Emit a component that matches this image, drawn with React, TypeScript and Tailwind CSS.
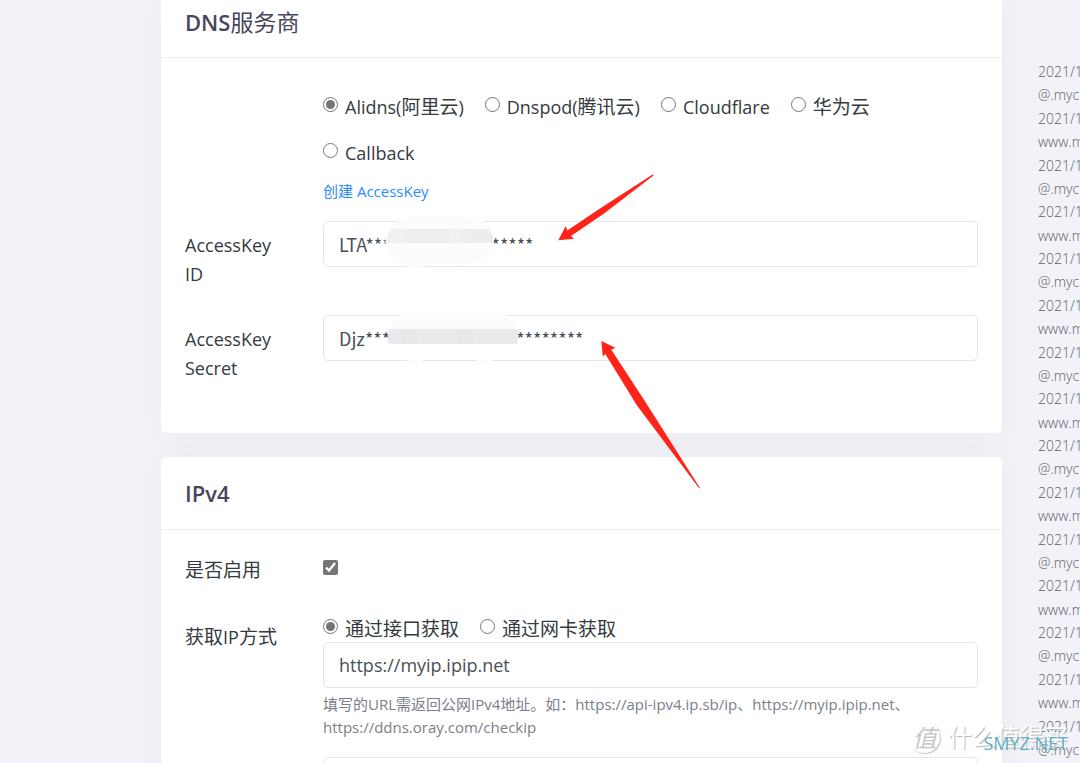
import React, { useState } from "react";
import type { ReactNode } from "react";

/** Chinese run, set a little larger than the Latin text around it. */
function Zh({ children }: { children: ReactNode }) {
  return <span className="text-[19px]">{children}</span>;
}

type ChoiceProps = {
  name: string;
  checked: boolean;
  onSelect: () => void;
  children: ReactNode;
};

function Choice({ name, checked, onSelect, children }: ChoiceProps) {
  return (
    <label className="flex items-start gap-[7px] whitespace-nowrap">
      <input
        type="radio"
        name={name}
        checked={checked}
        onChange={onSelect}
        className="mt-1 size-[15px] accent-[#757575]"
      />
      <span>{children}</span>
    </label>
  );
}

const inputClass =
  "block h-[46px] w-full rounded-[5px] border border-[#e2e5ec] bg-white px-[15px] text-[#495057] outline-none";
const rowClass = "grid grid-cols-[138px_1fr]";
const cardClass = "bg-white shadow-[0_0_30px_0_rgba(82,63,105,0.05)]";
const headingClass = "text-[22px] font-semibold leading-[29px] text-[#48465b]";

const logLines = Array.from({ length: 30 }, (_, i) =>
  i % 2 === 0 ? "2021/1" : i % 4 === 1 ? "@.myc" : "www.m"
);

function IdMask() {
  return (
    <svg
      className="pointer-events-none absolute -top-2 left-[56px]"
      width="124"
      height="56"
      viewBox="0 0 124 56"
      aria-hidden="true"
    >
      <path
        d="M20 7Q62-4 103 7Q114 14 115 28Q112 44 98 50Q84 54 60 50Q48 54 38 54H28Q18 50 10 40Q2 24 12 13Z"
        fill="#fcfcfc"
      />
      <path d="M13 16H109Q114 20 115 30H7Q8 21 13 16Z" fill="#eeeeee" />
      <path d="M13 16H25V30H7Q8 21 13 16Z" fill="#f1f1f2" />
      <path d="M70 16H83V30H70Z" fill="#f0f1f2" />
      <path d="M97 16H109Q114 20 115 30H97Z" fill="#ececed" />
    </svg>
  );
}

function SecretMask() {
  return (
    <svg
      className="pointer-events-none absolute -top-2 left-[60px]"
      width="140"
      height="60"
      viewBox="0 0 140 60"
      aria-hidden="true"
    >
      <path d="M18 7H122Q132 13 134 22H6Q8 13 18 7Z" fill="#fcfcfc" />
      <path d="M24 53Q32 50 40 53V56H24ZM94 53Q102 50 110 53V56H94Z" fill="#fdfdfd" />
      <rect x="5" y="22" width="130" height="15" rx="2" fill="#e9eaeb" />
      <path d="M20 22H34V37H20ZM76 22H90V37H76Z" fill="#e7e8e9" />
      <path d="M48 22H62V37H48ZM104 22H118V37H104Z" fill="#ebebec" />
    </svg>
  );
}

export default function App() {
  const [provider, setProvider] = useState("alidns");
  const [source, setSource] = useState("url");
  const [enabled, setEnabled] = useState(true);
  const [keyId, setKeyId] = useState("LTA" + "*".repeat(20));
  const [secret, setSecret] = useState("Djz" + "*".repeat(26));
  const [url, setUrl] = useState("https://myip.ipip.net");
  const [netUrl, setNetUrl] = useState("");

  return (
    <div className="relative grid h-screen grid-cols-[161px_1fr_78px] overflow-hidden bg-[#f2f3f8] font-['Open_Sans','Noto_Sans_CJK_SC',sans-serif] text-[18px] leading-[29px] text-[#343a40]">
      <main className="col-start-2 min-w-0">
        <section className={`${cardClass} rounded-b-[5px]`}>
          <header className="border-b border-[#ebedf2] px-6 pb-5 pt-2">
            <h2 className={headingClass}>
              DNS<span className="text-[23px] font-normal">服务商</span>
            </h2>
          </header>
          <div className="px-6 pb-10 pt-[35px]">
            <div className={rowClass}>
              <div className="col-start-2">
                <div
                  role="radiogroup"
                  aria-label="DNS服务商"
                  className="flex flex-wrap gap-x-[21px] gap-y-[17px]"
                >
                  <Choice name="provider" checked={provider === "alidns"} onSelect={() => setProvider("alidns")}>
                    Alidns(<Zh>阿里云</Zh>)
                  </Choice>
                  <Choice name="provider" checked={provider === "dnspod"} onSelect={() => setProvider("dnspod")}>
                    Dnspod(<Zh>腾讯云</Zh>)
                  </Choice>
                  <Choice name="provider" checked={provider === "cloudflare"} onSelect={() => setProvider("cloudflare")}>
                    Cloudflare
                  </Choice>
                  <Choice name="provider" checked={provider === "huawei"} onSelect={() => setProvider("huawei")}>
                    <Zh>华为云</Zh>
                  </Choice>
                  <Choice name="provider" checked={provider === "callback"} onSelect={() => setProvider("callback")}>
                    Callback
                  </Choice>
                </div>
                <a
                  href="#accesskey"
                  className="mb-[18px] mt-3 block text-[15px] leading-[23px] text-[#2a8bff]"
                >
                  创建 AccessKey
                </a>
              </div>
            </div>

            <div className={`${rowClass} mb-4`}>
              <label htmlFor="key-id" className="w-[100px] py-[10px]">
                AccessKey ID
              </label>
              <div className="relative">
                <input
                  id="key-id"
                  value={keyId}
                  onChange={(e) => setKeyId(e.target.value)}
                  className={`${inputClass} font-['Noto_Sans_CJK_SC',sans-serif]`}
                />
                <IdMask />
                <svg
                  className="pointer-events-none absolute -top-[51px] left-[227px] z-10"
                  width="110"
                  height="80"
                  viewBox="550 170 110 80"
                  aria-hidden="true"
                >
                  <path
                    d="M558.3 240.3L565.7 226L567.3 230.5L600 208.5L653 174.2L653.5 175.5L604 213.5L571 236L574 238.7Z"
                    fill="#ff2419"
                  />
                </svg>
              </div>
            </div>

            <div className={rowClass}>
              <label htmlFor="key-secret" className="w-[100px] py-[10px]">
                AccessKey Secret
              </label>
              <div className="relative">
                <input
                  id="key-secret"
                  value={secret}
                  onChange={(e) => setSecret(e.target.value)}
                  className={`${inputClass} font-['Noto_Sans_CJK_SC',sans-serif]`}
                />
                <SecretMask />
                <svg
                  className="pointer-events-none absolute left-[267px] top-[15px] z-10"
                  width="120"
                  height="170"
                  viewBox="590 330 120 170"
                  aria-hidden="true"
                >
                  <path
                    d="M601.3 341L615.3 347.7L611.3 349.7L643.5 399L700 488L699.3 488.5L637 405.5L605.3 354L602.7 356.5Z"
                    fill="#ff2419"
                  />
                </svg>
              </div>
            </div>
          </div>
        </section>

        <section className={`${cardClass} mt-6 rounded-t-[5px]`}>
          <header className="border-b border-[#ebedf2] px-6 pb-[21px] pt-[22px]">
            <h2 className={headingClass}>IPv4</h2>
          </header>
          <div className="px-6 pb-10 pt-4">
            <div className={`${rowClass} mb-[18px]`}>
              <label htmlFor="enabled" className="py-[10px]">
                <Zh>是否启用</Zh>
              </label>
              <input
                id="enabled"
                type="checkbox"
                checked={enabled}
                onChange={(e) => setEnabled(e.target.checked)}
                className="mt-[14px] size-[15px] accent-[#757575]"
              />
            </div>
            <div className={rowClass}>
              <div id="ip-source" className="py-[10px]">
                <Zh>获取</Zh>IP<Zh>方式</Zh>
              </div>
              <div>
                <div
                  role="radiogroup"
                  aria-labelledby="ip-source"
                  className="-mb-[2px] flex flex-wrap gap-x-[21px] pt-[2px]"
                >
                  <Choice name="source" checked={source === "url"} onSelect={() => setSource("url")}>
                    <Zh>通过接口获取</Zh>
                  </Choice>
                  <Choice name="source" checked={source === "card"} onSelect={() => setSource("card")}>
                    <Zh>通过网卡获取</Zh>
                  </Choice>
                </div>
                <input
                  aria-labelledby="ip-source"
                  value={url}
                  onChange={(e) => setUrl(e.target.value)}
                  className={inputClass}
                />
                <p className="mb-[18px] mt-[5px] text-[15px] leading-[23px] text-[#7b8088]">
                  填写的URL需返回公网IPv4地址。如：https://api-ipv4.ip.sb/ip、https://myip.ipip.net、
                  <br />
                  https://ddns.oray.com/checkip
                </p>
                <input
                  aria-label="IPv4"
                  value={netUrl}
                  onChange={(e) => setNetUrl(e.target.value)}
                  className={inputClass}
                />
              </div>
            </div>
          </div>
        </section>
      </main>

      <aside className="h-screen overflow-hidden pl-9 pt-[61px]">
        <ol className="flex h-full flex-col justify-between whitespace-nowrap pb-[2px] text-[14px] font-light leading-[22px] text-[#5c6068]">
          {logLines.map((line, i) => (
            <li key={i}>{line}</li>
          ))}
        </ol>
      </aside>

      <div className="pointer-events-none absolute bottom-2 right-3 z-20 flex items-center gap-2 text-white">
        <span className="flex size-[31px] items-center justify-center rounded-full text-[24px] italic text-[#c8c8ca] shadow-[1px_1px_1px_#c4c4c6]">
          值
        </span>
        <span className="text-[24px] leading-[36px] [text-shadow:1px_1px_1px_#b4b4b8]">什么值得买</span>
        <span className="absolute bottom-0 right-0 text-[18px] leading-6 text-[#5fb0c4]">SMYZ.NET</span>
      </div>
    </div>
  );
}
